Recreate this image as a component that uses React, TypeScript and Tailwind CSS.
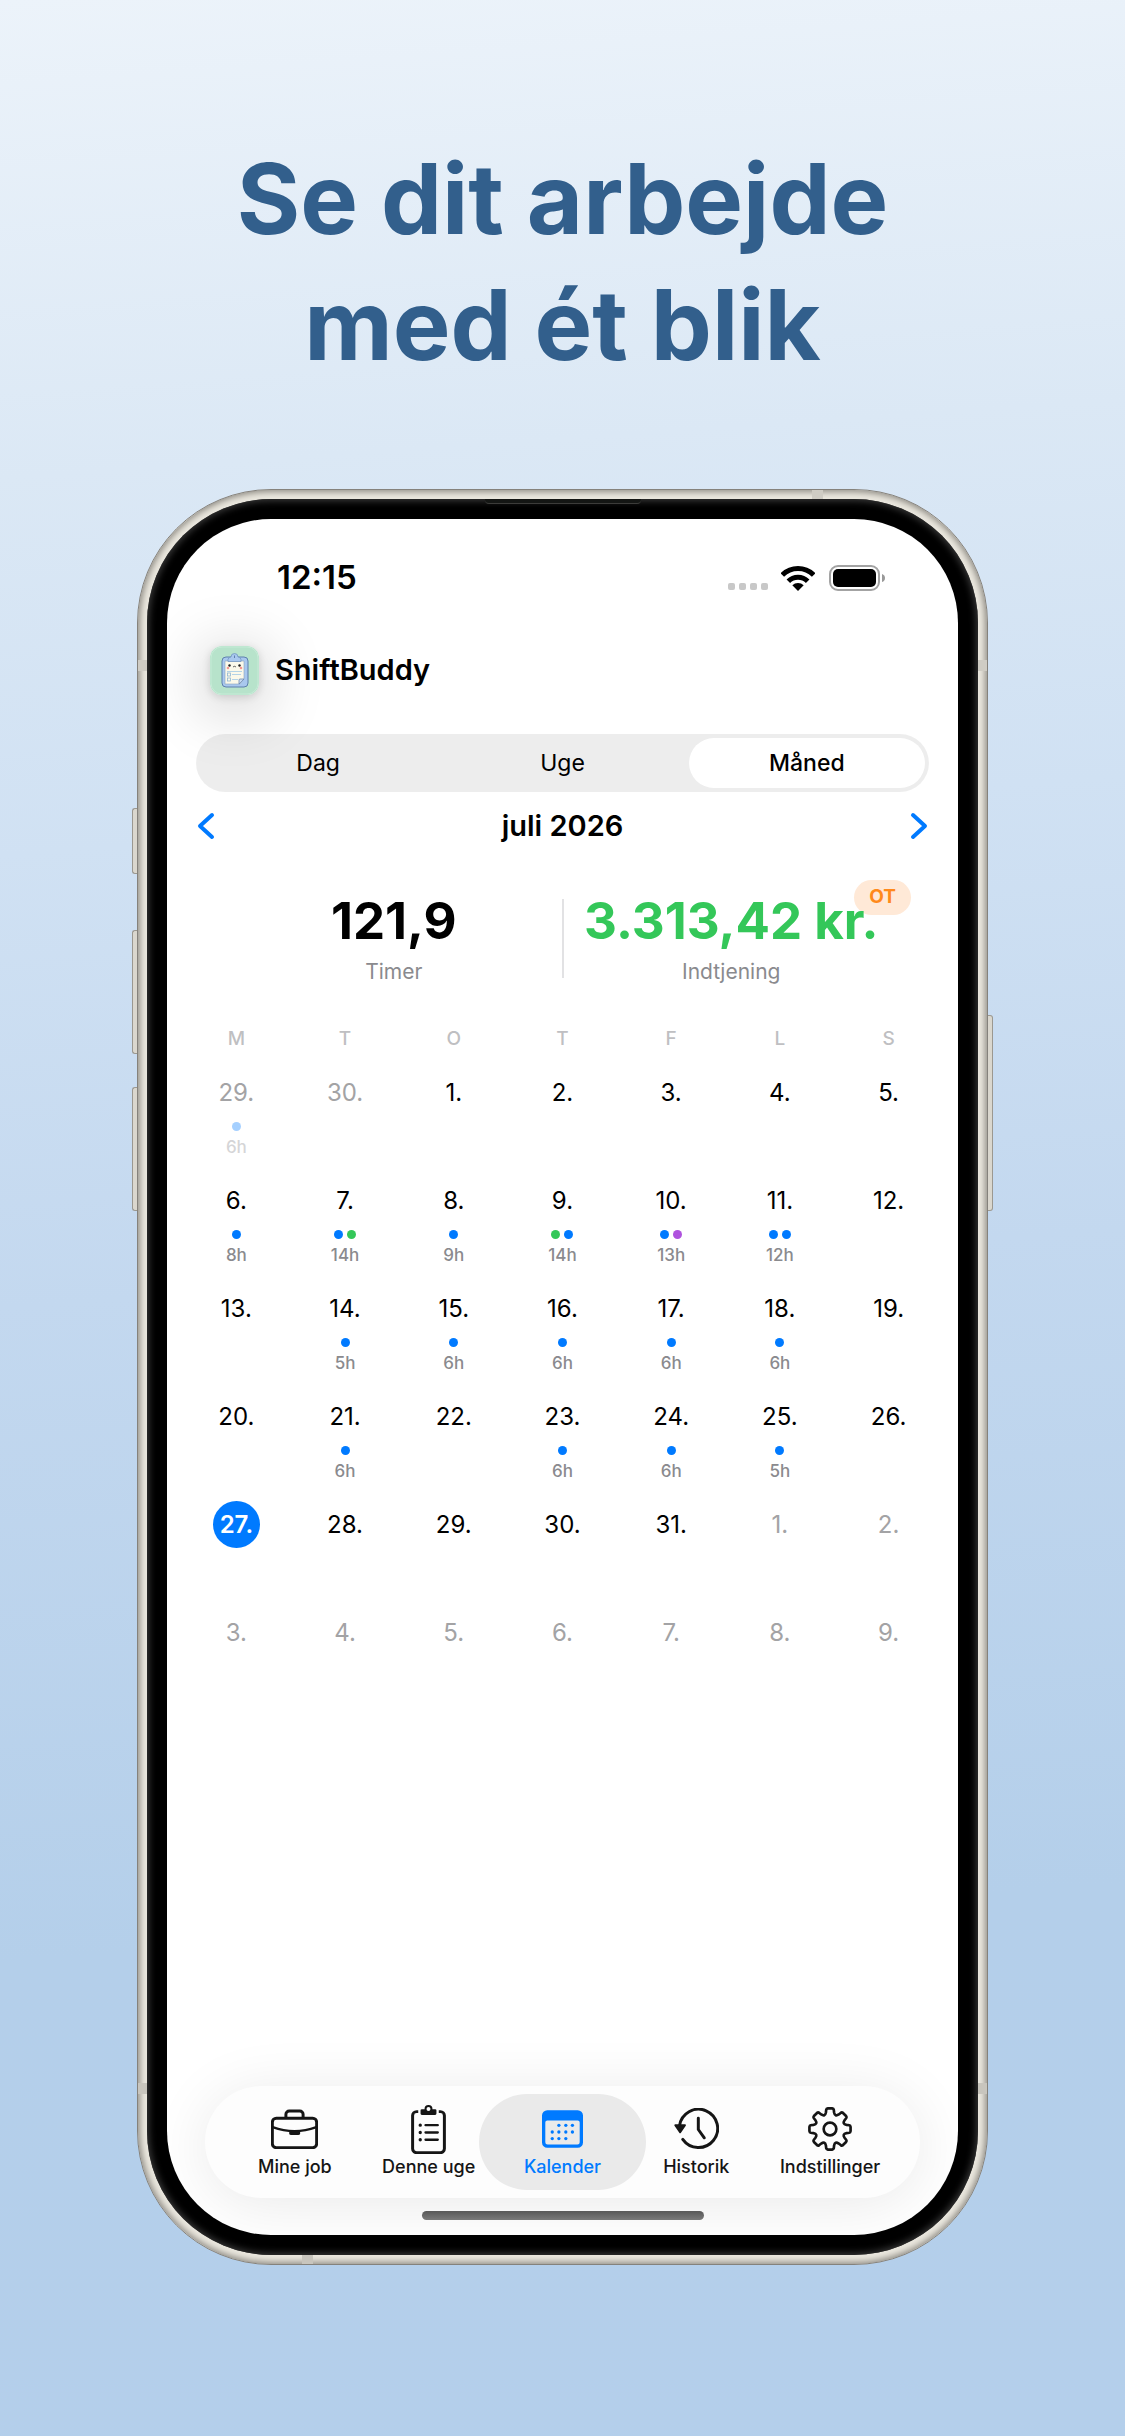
import { useState } from "react";

type Dot = "blue" | "green" | "purple";
type Day = { label: string; dots?: Dot[]; hours?: string; outside?: boolean; today?: boolean };

const dotColor = {
  blue: "bg-[#007aff]",
  green: "bg-[#34c759]",
  purple: "bg-[#af52de]",
};

const weekdays = ["M", "T", "O", "T", "F", "L", "S"];

const weeks: Day[][] = [
  [
    { label: "29.", dots: ["blue"], hours: "6h", outside: true },
    { label: "30.", outside: true },
    { label: "1." },
    { label: "2." },
    { label: "3." },
    { label: "4." },
    { label: "5." },
  ],
  [
    { label: "6.", dots: ["blue"], hours: "8h" },
    { label: "7.", dots: ["blue", "green"], hours: "14h" },
    { label: "8.", dots: ["blue"], hours: "9h" },
    { label: "9.", dots: ["green", "blue"], hours: "14h" },
    { label: "10.", dots: ["blue", "purple"], hours: "13h" },
    { label: "11.", dots: ["blue", "blue"], hours: "12h" },
    { label: "12." },
  ],
  [
    { label: "13." },
    { label: "14.", dots: ["blue"], hours: "5h" },
    { label: "15.", dots: ["blue"], hours: "6h" },
    { label: "16.", dots: ["blue"], hours: "6h" },
    { label: "17.", dots: ["blue"], hours: "6h" },
    { label: "18.", dots: ["blue"], hours: "6h" },
    { label: "19." },
  ],
  [
    { label: "20." },
    { label: "21.", dots: ["blue"], hours: "6h" },
    { label: "22." },
    { label: "23.", dots: ["blue"], hours: "6h" },
    { label: "24.", dots: ["blue"], hours: "6h" },
    { label: "25.", dots: ["blue"], hours: "5h" },
    { label: "26." },
  ],
  [
    { label: "27.", today: true },
    { label: "28." },
    { label: "29." },
    { label: "30." },
    { label: "31." },
    { label: "1.", outside: true },
    { label: "2.", outside: true },
  ],
  [
    { label: "3.", outside: true },
    { label: "4.", outside: true },
    { label: "5.", outside: true },
    { label: "6.", outside: true },
    { label: "7.", outside: true },
    { label: "8.", outside: true },
    { label: "9.", outside: true },
  ],
];

function BriefcaseIcon() {
  return (
    <svg width="47" height="40" viewBox="0 0 142 121" fill="none" stroke="currentColor" strokeWidth="9">
      <rect x="4" y="28" width="134" height="89" rx="12" />
      <path d="M45 27V16a10 10 0 0 1 10-10h32a10 10 0 0 1 10 10v11" />
      <path d="M5 55Q71 79 137 55" strokeWidth="7" />
      <path d="M55 64h33v9a6 6 0 0 1-6 6H61a6 6 0 0 1-6-6z" fill="currentColor" stroke="none" />
    </svg>
  );
}

function ClipboardIcon() {
  return (
    <svg width="35" height="49" viewBox="0 0 104 148" fill="none" stroke="currentColor" strokeWidth="9" strokeLinecap="round">
      <path d="M21 20h-5a12 12 0 0 0-12 12v100a12 12 0 0 0 12 12h72a12 12 0 0 0 12-12V32a12 12 0 0 0-12-12h-5" strokeLinecap="butt" />
      <circle cx="52" cy="12" r="9" strokeWidth="6" />
      <path d="M28 16q0-3 4-3h9a12 12 0 0 0 22 0h9q4 0 4 3v10q0 4-4 4H32q-4 0-4-4z" fill="currentColor" stroke="none" />
      <path d="M27 61h.1M27 83h.1M27 105h.1" strokeWidth="10" />
      <path d="M43 61h37M43 83h37M43 105h37" strokeWidth="7" />
    </svg>
  );
}

function CalendarIcon() {
  const marks = [[51, 46], [72, 46], [92, 46], [31, 66], [51, 66], [72, 66], [92, 66], [31, 86], [51, 86], [72, 86]];
  return (
    <svg width="41" height="38" viewBox="0 0 124 114" fill="currentColor">
      <path
        fillRule="evenodd"
        d="M16 0h92a16 16 0 0 1 16 16v82a16 16 0 0 1-16 16H16a16 16 0 0 1-16-16V16A16 16 0 0 1 16 0zM16 31a6 6 0 0 0-6 6v60a7 7 0 0 0 7 7h90a7 7 0 0 0 7-7V37a6 6 0 0 0-6-6z"
      />
      {marks.map(([x, y]) => (
        <circle key={`${x}-${y}`} cx={x} cy={y} r="5" />
      ))}
    </svg>
  );
}

function HistoryIcon() {
  return (
    <svg width="45" height="42" viewBox="0 0 135 127" fill="none" stroke="currentColor" strokeWidth="9" strokeLinecap="round" strokeLinejoin="round">
      <path d="M16 54A58 58 0 1 1 26 95" />
      <path d="M73 31v34l18 25" />
      <path d="M3 52h30L18 74z" fill="currentColor" strokeWidth="5" />
    </svg>
  );
}

// one tooth every 45 degrees, joined by rounded valleys
function gearPath() {
  const at = (deg: number, r: number) => {
    const a = ((deg - 90) * Math.PI) / 180;
    return `${(66 + r * Math.cos(a)).toFixed(1)} ${(66 + r * Math.sin(a)).toFixed(1)}`;
  };
  let d = "";
  for (let t = 0; t < 360; t += 45) {
    d += `${t === 0 ? "M" : "L"}${at(t - 14, 51)}L${at(t - 11, 59)}Q${at(t - 10, 62)} ${at(t - 6, 62)}`;
    d += `L${at(t + 6, 62)}Q${at(t + 10, 62)} ${at(t + 11, 59)}L${at(t + 14, 51)}Q${at(t + 22.5, 39)} ${at(t + 31, 51)}`;
  }
  return d + "Z";
}

function GearIcon() {
  return (
    <svg width="44" height="44" viewBox="0 0 132 132" fill="none" stroke="currentColor" strokeWidth="8" strokeLinejoin="round">
      <path d={gearPath()} />
      <circle cx="66" cy="66" r="19" />
    </svg>
  );
}

function AppLogo() {
  return (
    <svg viewBox="0 0 49 49" className="size-[49px]" fill="none" aria-hidden="true">
      <rect width="49" height="49" rx="12" fill="#b7e3cb" />
      <rect x="1" y="1" width="47" height="47" rx="11" stroke="#c6ebd7" />
      <rect x="12" y="11" width="26" height="30" rx="4" fill="#a9c8ee" stroke="#5f80ad" />
      <path d="M15 15h19v18l-4 5H15z" fill="#fbf9ea" stroke="#8ba3bd" strokeWidth=".6" />
      <path d="M34 33l-5 5v-4q0-1 1-1z" fill="#c9dcf2" stroke="#5f80ad" strokeWidth=".7" />
      <path d="M18 15.500v-2q0-2 3-2.500 0-3.500 3.500-3.500T28 11q3 .5 3 2.500v2z" fill="#a9c8ee" stroke="#6c8fbd" strokeWidth=".7" />
      <path d="M24.500 9.500v2.500" stroke="#5f80ad" />
      <circle cx="19.500" cy="19.500" r="1.200" fill="#222" />
      <circle cx="29.500" cy="19.500" r="1.200" fill="#222" />
      <path d="M23 20.300q.8 1 1.500 0 .8 1 1.500 0" stroke="#333" strokeWidth=".8" />
      <circle cx="18" cy="22" r="1.300" fill="#f59a92" />
      <circle cx="31" cy="22" r="1.300" fill="#f59a92" />
      <path d="M17 25.500h15M22 28.500h9M22 33.500h6" stroke="#b4d3e6" />
      <rect x="17.500" y="27" width="3" height="3" stroke="#8fb6d3" strokeWidth=".8" />
      <rect x="17.500" y="32" width="3" height="3" stroke="#8fb6d3" strokeWidth=".8" />
    </svg>
  );
}

function StatusBar() {
  return (
    <div className="flex h-[118px] items-center justify-between pr-[73px] pl-[110px]">
      <span className="text-[33px] font-semibold">12:15</span>
      <div className="flex items-center">
        <svg width="40" height="26" viewBox="0 0 40 26" fill="#c8c8c8">
          <rect y="18" width="7" height="7" rx="2" />
          <rect x="11" y="18" width="7" height="7" rx="2" />
          <rect x="22" y="18" width="7" height="7" rx="2" />
          <rect x="33" y="18" width="7" height="7" rx="2" />
        </svg>
        <svg width="34" height="25" viewBox="0 0 102 75" fill="none" stroke="#000" strokeWidth="15" className="ml-[13px]">
          <path d="M4 27A67 67 0 0 1 98 27" />
          <path d="M22 46A41 41 0 0 1 80 46" />
          <path d="M51 75L34 58A24 24 0 0 1 68 58z" fill="#000" stroke="none" />
        </svg>
        <svg width="56" height="26" viewBox="0 0 56 26" fill="none" className="ml-[14px]">
          <rect x="1" y="1" width="49" height="24" rx="8" stroke="#a3a3a3" strokeWidth="2" />
          <rect x="4" y="4" width="43" height="18" rx="5" fill="#000" />
          <path d="M53 9q3 1 3 4t-3 4z" fill="#999" />
        </svg>
      </div>
    </div>
  );
}

function DayCell({ day }: { day: Day }) {
  return (
    <td className="h-[108px] p-0 align-top">
      <button type="button" className={`flex w-full flex-col items-center ${day.outside ? "text-[#a3a3a5]" : "text-black"}`}>
        <span
          className={`flex size-[47px] items-center justify-center rounded-full text-[24px] ${
            day.today ? "bg-[#007aff] font-semibold text-white" : ""
          }`}
        >
          {day.label}
        </span>
        {day.dots && (
          <span className={`flex flex-col items-center ${day.outside ? "opacity-35" : ""}`}>
            <span className="mt-[6px] flex gap-[4px]">
              {day.dots.map((dot, i) => (
                <span key={i} className={`size-[9px] rounded-full ${dotColor[dot]}`} />
              ))}
            </span>
            <span className="mt-[6px] text-[17px] leading-[20px] font-medium text-[#8a8a8e]">{day.hours}</span>
          </span>
        )}
      </button>
    </td>
  );
}

const tabs = [
  { label: "Mine job", icon: <BriefcaseIcon /> },
  { label: "Denne uge", icon: <ClipboardIcon /> },
  { label: "Kalender", icon: <CalendarIcon />, active: true },
  { label: "Historik", icon: <HistoryIcon /> },
  { label: "Indstillinger", icon: <GearIcon /> },
];

function TabBar() {
  return (
    <nav className="mx-[38px] grid h-[112px] grid-cols-5 rounded-full bg-[#fdfdfd] px-[23px] py-[8px] shadow-[0_6px_60px_rgba(0,0,0,0.09)]">
      {tabs.map((tab) => (
        <a
          key={tab.label}
          href="#"
          className={`flex flex-col items-center text-[18px] leading-[22px] font-medium whitespace-nowrap ${
            tab.active ? "-mx-[17px] rounded-full bg-[#eaeaea] text-[#007aff]" : "text-[#151515]"
          }`}
        >
          <span className="mt-[8px] flex h-[54px] items-center">{tab.icon}</span>
          {tab.label}
        </a>
      ))}
    </nav>
  );
}

export default function App() {
  const [view, setView] = useState("Måned");

  return (
    <main className="flex min-h-screen flex-col bg-[linear-gradient(176deg,#ecf3fa_0%,#dbe8f5_19%,#d0e1f3_34%,#c3d8ef_52%,#b4cfea_78%,#b4cfeb_100%)] px-[137px] pb-[171px] font-['Inter',sans-serif] text-black">
      <h1 className="mt-[136px] text-center text-[97px] leading-[126px] font-bold whitespace-nowrap text-[#325f8c]">
        Se dit arbejde
        <br />
        med ét blik
      </h1>

      <div className="relative mt-[101px] flex flex-1 flex-col rounded-[134px] border border-[#85827c] bg-[#ebe8df] p-[9px] shadow-[inset_0_0_6px_2px_#8f8c85]">
        {/* side buttons */}
        <div className="absolute top-[318px] -left-[6px] h-[66px] w-[5px] rounded-l-[3px] border border-r-0 border-[#9b9890] bg-[#dad7ce]" />
        <div className="absolute top-[440px] -left-[6px] h-[124px] w-[5px] rounded-l-[3px] border border-r-0 border-[#9b9890] bg-[#dad7ce]" />
        <div className="absolute top-[597px] -left-[6px] h-[124px] w-[5px] rounded-l-[3px] border border-r-0 border-[#9b9890] bg-[#dad7ce]" />
        <div className="absolute top-[525px] -right-[6px] h-[196px] w-[5px] rounded-r-[3px] border border-l-0 border-[#9b9890] bg-[#dad7ce]" />
        {/* antenna bands */}
        <div className="absolute top-[170px] left-0 h-[11px] w-[9px] bg-[#cfccc4]" />
        <div className="absolute top-[170px] right-0 h-[11px] w-[9px] bg-[#cfccc4]" />
        <div className="absolute bottom-[170px] left-0 h-[11px] w-[9px] bg-[#c8c5bd]" />
        <div className="absolute right-0 bottom-[170px] h-[11px] w-[9px] bg-[#c8c5bd]" />
        <div className="absolute top-0 right-[164px] h-[9px] w-[11px] bg-[#cfccc4]" />
        <div className="absolute bottom-0 left-[164px] h-[9px] w-[11px] bg-[#c8c5bd]" />

        <div className="relative flex flex-1 flex-col rounded-[124px] bg-black p-[20px] shadow-[inset_0_0_7px_2px_#3a3a3a]">
          <div className="absolute top-0 left-1/2 h-[5px] w-[156px] -translate-x-1/2 rounded-b-[4px] border-b border-[#3c3c3a] bg-[#141614]" />

          <div className="flex flex-1 flex-col overflow-hidden rounded-[104px] bg-white">
            <StatusBar />

            <header className="flex h-[66px] items-center gap-[16px] pl-[43px]">
              <div className="rounded-[12px] shadow-[0_2px_8px_rgba(0,0,0,0.14),0_10px_60px_8px_rgba(0,0,0,0.18)]">
                <AppLogo />
              </div>
              <span className="text-[29px] font-semibold">ShiftBuddy</span>
            </header>

            <div className="mx-[29px] mt-[31px] grid h-[58px] grid-cols-3 rounded-full bg-black/7">
              {["Dag", "Uge", "Måned"].map((name) => (
                <button
                  key={name}
                  type="button"
                  aria-pressed={view === name}
                  onClick={() => setView(name)}
                  className={`m-[4px] rounded-full text-[23px] ${view === name ? "bg-white font-medium" : ""}`}
                >
                  {name}
                </button>
              ))}
            </div>

            <div className="mt-[6px] flex h-[56px] items-center justify-between px-[30px]">
              <button type="button" aria-label="Forrige måned" className="text-[#007aff]">
                <svg width="18" height="28" viewBox="0 0 18 28" fill="none" stroke="currentColor" strokeWidth="4" strokeLinecap="round" strokeLinejoin="round">
                  <path d="M15 3L3 14l12 11" />
                </svg>
              </button>
              <h2 className="text-[29px] font-semibold">juli 2026</h2>
              <button type="button" aria-label="Næste måned" className="text-[#007aff]">
                <svg width="18" height="28" viewBox="0 0 18 28" fill="none" stroke="currentColor" strokeWidth="4" strokeLinecap="round" strokeLinejoin="round">
                  <path d="M3 3l12 11L3 25" />
                </svg>
              </button>
            </div>

            <div className="mx-[59px] mt-[37px] flex items-center">
              <div className="flex-1 text-center">
                <div className="text-[51px] leading-[60px] font-bold">121,9</div>
                <div className="mt-[7px] text-[21px] leading-[28px] text-[#8a8a8e]">Timer</div>
              </div>
              <div className="h-[79px] w-[2px] bg-[#e2e2e4]" />
              <div className="relative flex-1 text-center">
                <span className="absolute -top-[11px] -right-[12px] flex h-[35px] w-[57px] items-center justify-center rounded-full bg-[#ffe9d7] text-[19px] font-bold text-[#ff8a1c]">
                  OT
                </span>
                <div className="relative text-[51px] leading-[60px] font-bold whitespace-nowrap text-[#34c759]">3.313,42 kr.</div>
                <div className="mt-[7px] text-[21px] leading-[28px] text-[#8a8a8e]">Indtjening</div>
              </div>
            </div>

            <table className="mx-[15px] mt-[36px] table-fixed border-collapse">
              <thead>
                <tr>
                  {weekdays.map((name, i) => (
                    <th key={i} className="h-[47px] p-0 pb-[12px] text-[19px] font-medium text-[#bfbfc2]">
                      {name}
                    </th>
                  ))}
                </tr>
              </thead>
              <tbody>
                {weeks.map((week, i) => (
                  <tr key={i}>
                    {week.map((day) => (
                      <DayCell key={day.label} day={day} />
                    ))}
                  </tr>
                ))}
              </tbody>
            </table>

            <div className="flex flex-1 flex-col justify-end">
              <TabBar />
              <div className="mx-auto mt-[13px] mb-[15px] h-[9px] w-[282px] rounded-full bg-linear-to-b from-[#585858] to-[#7a7a7a]" />
            </div>
          </div>
        </div>
      </div>
    </main>
  );
}
